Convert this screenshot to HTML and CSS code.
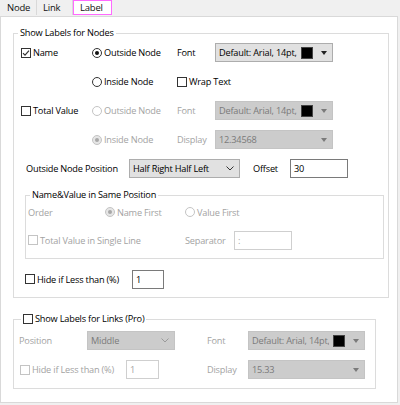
FILE: index.html
```html
<!DOCTYPE html>
<html>
<head>
<meta charset="utf-8">
<link rel="stylesheet" href="styles.css">
</head>
<body>
<div class="tabs">
  <div class="tab">Node</div>
  <div class="tab">Link</div>
  <div class="tab active">Label</div>
</div>
<div class="panel">
  <div class="group g1">
    <div class="gtitle">Show Labels for Nodes</div>
    <div class="grid">
      <label class="chk"><span class="box"><svg width="8" height="8" viewBox="0 0 8 8"><path d="M1 4.2 L3 6.2 L7 1.6" fill="none" stroke="#333" stroke-width="1.2"/></svg></span>Name</label>
      <label class="rad"><span class="ring on"></span>Outside Node</label>
      <span class="lbl">Font</span>
      <div class="combo"><span class="ctext">Default: Arial, 14pt,</span><span class="swatch"></span><span class="tri"></span></div>

      <span></span>
      <label class="rad"><span class="ring"></span>Inside Node</label>
      <label class="chk span2"><span class="box"></span>Wrap Text</label>

      <label class="chk"><span class="box"></span>Total Value</label>
      <label class="rad dis"><span class="ring"></span>Outside Node</label>
      <span class="lbl dis">Font</span>
      <div class="combo off"><span class="ctext">Default: Arial, 14pt,</span><span class="swatch"></span><span class="tri"></span></div>

      <span></span>
      <label class="rad dis"><span class="ring on"></span>Inside Node</label>
      <span class="lbl dis">Display</span>
      <div class="combo off"><span class="ctext">12.34568</span><span class="tri"></span></div>
    </div>

    <div class="posrow">
      <span class="poslbl">Outside Node Position</span>
      <div class="combo pos"><span class="ctext">Half Right Half Left</span><svg class="chev" width="8" height="5" viewBox="0 0 8 5"><path d="M0.5 0.5 L4 4 L7.5 0.5" fill="none" stroke="#333" stroke-width="1"/></svg></div>
      <span class="offlbl">Offset</span>
      <div class="input off-in">30</div>
    </div>

    <div class="group inner">
      <div class="gtitle">Name&amp;Value in Same Position</div>
      <div class="orderrow">
        <span class="lbl dis ordlbl">Order</span>
        <label class="rad dis namefirst"><span class="ring on"></span>Name First</label>
        <label class="rad dis"><span class="ring"></span>Value First</label>
      </div>
      <div class="seprow">
        <label class="chk dis single"><span class="box"></span>Total Value in Single Line</label>
        <span class="lbl dis seplbl">Separator</span>
        <div class="input dis-in sep">:</div>
      </div>
    </div>

    <div class="hiderow">
      <label class="chk hidechk"><span class="box"></span>Hide if Less than (%)</label>
      <div class="input hide-in">1</div>
    </div>
  </div>

  <div class="group g2">
    <div class="gtitle g2title"><label class="chk"><span class="box"></span>Show Labels for Links (Pro)</label></div>
    <div class="linkrow">
      <span class="lbl dis c1">Position</span>
      <div class="combo off mid"><span class="ctext">Middle</span><svg class="chev" width="8" height="5" viewBox="0 0 8 5"><path d="M0.5 0.5 L4 4 L7.5 0.5" fill="none" stroke="#9a9a9a" stroke-width="1"/></svg></div>
      <span class="lbl dis c3 fontl">Font</span>
      <div class="combo off wide"><span class="ctext">Default: Arial, 14pt,</span><span class="swatch"></span><span class="tri"></span></div>
    </div>
    <div class="linkrow">
      <label class="chk dis c1b"><span class="box"></span>Hide if Less than (%)</label>
      <div class="input dis-in lhide">1</div>
      <span class="lbl dis c3 displ">Display</span>
      <div class="combo off wide"><span class="ctext">15.33</span><span class="tri"></span></div>
    </div>
  </div>
</div>
</body>
</html>
```

FILE: styles.css
```css
* { box-sizing: border-box; }
html, body { margin: 0; padding: 0; }
body {
  background: #f0f0f0;
  font-family: "Open Sans", "Noto Sans", "Liberation Sans", sans-serif;
  font-size: 9.2px;
  letter-spacing: -0.2px;
  color: #000;
  width: 400px;
  height: 405px;
  overflow: hidden;
}
.tabs {
  display: flex;
  height: 16px;
}
.tab {
  height: 15px;
  line-height: 15px;
  padding-left: 7px;
  border-right: 1px solid #d9d9d9;
  width: 37px;
  color: #111;
  font-size: 9.5px;
}
.tab:nth-child(2) { width: 36px; padding-left: 6px; }
.tab.active {
  width: 39px;
  background: #fff;
  border: 1px solid #ff6aff;
  padding-left: 6px;
  line-height: 13px;
}
.panel {
  width: 398px;
  height: 387px;
  background: #fff;
  border: 1px solid #d9d9d9;
  padding: 16px 0 0 12px;
}
.group {
  border: 1px solid #dcdcdc;
}
.g1 {
  width: 376px;
  padding-bottom: 4px;
}
.gtitle {
  width: max-content;
  height: 14px;
  line-height: 14px;
  margin: -8px 0 0 4px;
  padding: 0 2px;
  background: #fff;
}
.grid {
  display: grid;
  grid-template-columns: 71px 85px 38px 118px;
  grid-auto-rows: 29px;
  align-items: center;
  padding-left: 7px;
  margin-top: -2px;
}
.span2 { grid-column: span 2; }
.chk, .rad {
  display: flex;
  align-items: center;
  white-space: nowrap;
}
.box {
  width: 10px;
  height: 10px;
  border: 1px solid #333;
  margin-right: 2px;
  display: flex;
  align-items: center;
  justify-content: center;
  background: #fff;
  flex: none;
}
.ring {
  width: 10px;
  height: 10px;
  border-radius: 50%;
  border: 1px solid #333;
  margin-right: 2px;
  position: relative;
  background: #fff;
  flex: none;
}
.ring.on::after {
  content: "";
  position: absolute;
  left: 2px;
  top: 2px;
  width: 4px;
  height: 4px;
  border-radius: 50%;
  background: #111;
}
.dis { color: #a3a3a3; }
.dis .ring { border-color: #c4c4c4; background: #fff; }
.dis .ring.on { background: #e6e6e6; }
.dis .ring.on::after { background: #a8a8a8; }
.dis .box { border-color: #c4c4c4; }
.combo {
  height: 19px;
  border: 1px solid #adadad;
  background: #e1e1e1;
  display: flex;
  align-items: center;
  padding: 0 0 0 3px;
  white-space: nowrap;
  overflow: hidden;
}
.combo .ctext { flex: 1 1 auto; min-width: 0; overflow: hidden; }
.swatch {
  width: 12px;
  height: 12px;
  background: #000;
  border: 1px solid #444;
  margin: 0 8px 0 4px;
  flex: none;
}
.tri {
  width: 0;
  height: 0;
  border-left: 3.5px solid transparent;
  border-right: 3.5px solid transparent;
  border-top: 4px solid #222;
  margin-right: 5px;
  flex: none;
}
.combo.off {
  background: #cccccc;
  border-color: #c4c4c4;
  color: #7a7a7a;
}
.combo.off .tri { border-top-color: #7a7a7a; }
.chev { flex: none; margin-right: 5px; }
.posrow {
  display: flex;
  align-items: center;
  height: 29px;
  padding-left: 12px;
}
.poslbl { width: 103px; }
.combo.pos { width: 111px; padding-left: 3px; }
.offlbl { margin-left: 13px; width: 37px; }
.input {
  height: 19px;
  border: 1px solid #7a7a7a;
  background: #fff;
  line-height: 17px;
  padding-left: 3px;
}
.off-in { width: 58px; }
.dis-in { border-color: #cfcfcf; color: #a3a3a3; }
.inner {
  margin: 12px 4px 0 11px;
  padding-bottom: 4px;
}
.orderrow {
  display: flex;
  align-items: center;
  height: 20px;
  padding-left: 2px;
}
.ordlbl { width: 77px; }
.namefirst { width: 80px; }
.seprow {
  display: flex;
  align-items: center;
  height: 28px;
  margin-top: 4px;
  padding-left: 2px;
}
.single { width: 157px; }
.seplbl { width: 49px; }
.sep { width: 58px; }
.hiderow {
  display: flex;
  align-items: center;
  height: 28px;
  margin-top: 6px;
  padding-left: 11px;
}
.hidechk { width: 107px; }
.hide-in { width: 32px; }
.g2 {
  width: 363px;
  margin-top: 21px;
  padding-bottom: 4px;
}
.g2title { margin-left: 7px; }
.linkrow {
  display: flex;
  align-items: center;
  height: 29px;
  padding-left: 5px;
}
.c1 { width: 68px; }
.combo.mid { width: 88px; padding-left: 3px; }
.fontl { margin-left: 32px; }
.c3 { width: 41px; }
.combo.wide { width: 117px; }
.c1b { width: 107px; padding-left: 1px; }
.lhide { width: 33px; }
.displ { margin-left: 48px; }
```
